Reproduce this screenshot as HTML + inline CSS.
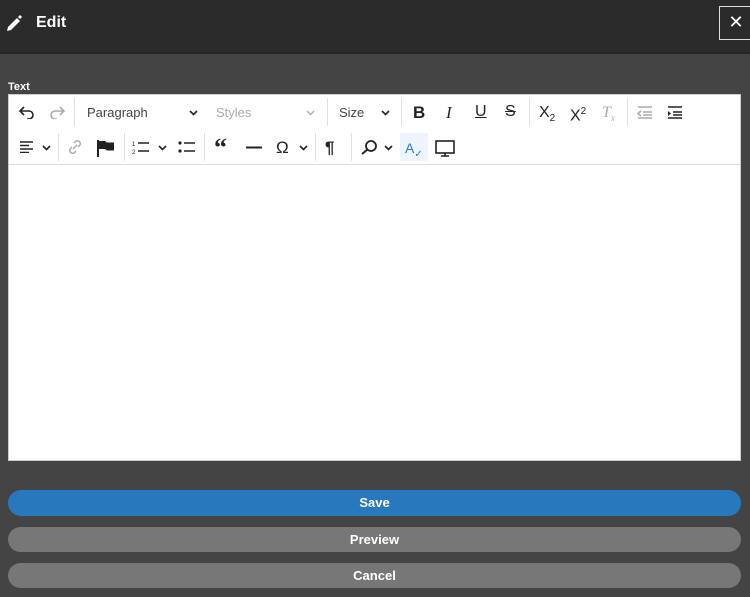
<!DOCTYPE html>
<html><head><style>
*{box-sizing:border-box;margin:0;padding:0}
body{width:750px;height:597px;background:#444;font-family:"Liberation Sans",sans-serif;position:relative;overflow:hidden}
.hdr{position:absolute;left:0;top:0;width:750px;height:54px;background:#2b2b2b;border-bottom:2px solid #262626}
.hdr .t{position:absolute;left:36px;top:14px;color:#fff;font-weight:bold;font-size:16px}
.close{position:absolute;left:719px;top:6px;width:34px;height:34px;border:1.5px solid #ddd;color:#fff;font-size:18px;text-align:center;line-height:30px}
.lbl{position:absolute;left:8px;top:81px;color:#fff;font-size:11px;font-weight:bold}
.ed{position:absolute;left:8px;top:94px;width:733px;height:367px;background:#fff;border:1px solid #ccc}
.tb{position:absolute;left:0;top:0;width:100%;height:70px;border-bottom:1px solid #ddd}
.i{position:absolute;font-size:14px;color:#222;line-height:18px}
.g{color:#aaa}
.sep{position:absolute;width:1px;height:28px;background:#e0e0e0}
.btn{position:absolute;left:8px;width:733px;border-radius:13px;color:#fff;font-weight:bold;font-size:13px;text-align:center}
svg{position:absolute}
</style></head><body>
<div class="hdr">
<svg style="left:6px;top:14px" width="16" height="18" viewBox="0 0 16 18"><path d="M1 17l1-4L11 4l3 3-9 9z M12 3l2-2 2 2-2 2z" fill="#fff"/></svg>
<div class="t">Edit</div>
</div>
<div class="close">✕</div>
<div class="lbl">Text</div>
<div class="ed">
<div class="tb">
<svg style="left:10px;top:10px" width="16" height="14"><path d="M5 2L1 6l4 4M1 6h9a4 4 0 010 8H8" fill="none" stroke="#222" stroke-width="1.6"/></svg>
<svg style="left:40px;top:10px" width="16" height="14"><path d="M11 2l4 4-4 4M15 6H6a4 4 0 000 8h2" fill="none" stroke="#aaa" stroke-width="1.6"/></svg>
<div class="sep" style="left:65px;top:3px"></div>
<span class="i" style="left:78px;top:9px;font-size:13px;color:#444">Paragraph</span>
<svg style="left:180px;top:15px" width="9" height="6"><path d="M1 1l3.5 3.5L8 1" fill="none" stroke="#222" stroke-width="1.6"/></svg>
<span class="i g" style="left:207px;top:9px;font-size:13px">Styles</span>
<svg style="left:297px;top:15px" width="9" height="6"><path d="M1 1l3.5 3.5L8 1" fill="none" stroke="#aaa" stroke-width="1.4"/></svg>
<div class="sep" style="left:318px;top:3px"></div>
<span class="i" style="left:330px;top:9px;font-size:13px;color:#444">Size</span>
<svg style="left:372px;top:15px" width="9" height="6"><path d="M1 1l3.5 3.5L8 1" fill="none" stroke="#222" stroke-width="1.6"/></svg>
<div class="sep" style="left:392px;top:3px"></div>
<span class="i" style="left:404px;top:9px;font-size:17px;font-weight:bold">B</span>
<span class="i" style="left:437px;top:9px;font-size:17px;font-style:italic;font-family:'Liberation Serif'">I</span>
<span class="i" style="left:466px;top:8px;font-size:16px;text-decoration:underline">U</span>
<span class="i" style="left:496px;top:8px;font-size:16px;text-decoration:line-through">S</span>
<div class="sep" style="left:520px;top:3px"></div>
<span class="i" style="left:530px;top:9px;font-size:16px">X<sub style="font-size:10px">2</sub></span>
<span class="i" style="left:561px;top:8px;font-size:16px">X<sup style="font-size:10px">2</sup></span>
<span class="i g" style="left:593px;top:9px;font-size:16px;font-style:italic;font-family:'Liberation Serif'">T<sub style="font-size:9px">x</sub></span>
<div class="sep" style="left:618px;top:3px"></div>
<svg style="left:628px;top:11px" width="16" height="13"><path d="M1 1h14M6 6h9M6 9h9M1 12h14M4 5L1 7.5 4 10" fill="none" stroke="#aaa" stroke-width="1.6"/></svg>
<svg style="left:658px;top:11px" width="16" height="13"><path d="M1 1h14M6 6h9M6 9h9M1 12h14" fill="none" stroke="#222" stroke-width="1.6"/><path d="M1 5l3 2.5L1 10z" fill="#222"/></svg>
<svg style="left:10px;top:46px" width="15" height="12"><path d="M1 1h13M1 4.5h9M1 8h13M1 11.5h9" stroke="#222" stroke-width="1.5"/></svg>
<svg style="left:33px;top:50px" width="9" height="6"><path d="M1 1l3.5 3.5L8 1" fill="none" stroke="#222" stroke-width="1.6"/></svg>
<div class="sep" style="left:49px;top:38px"></div>
<svg style="left:58px;top:44px" width="16" height="16"><path d="M6 10l4-4M7 4l2-2a3 3 0 014 4l-2 2M9 12l-2 2a3 3 0 01-4-4l2-2" fill="none" stroke="#aaa" stroke-width="1.4"/></svg>
<svg style="left:87px;top:44px" width="20" height="18"><path d="M2 1v17" stroke="#222" stroke-width="2"/><path d="M3 2h6l2 1.5h7v8h-7l-2-1.5H3z" fill="#222"/></svg>
<div class="sep" style="left:115px;top:38px"></div>
<svg style="left:123px;top:45px" width="18" height="14"><text x="0" y="6" font-size="6" fill="#222" font-family="Liberation Sans">1</text><text x="0" y="14" font-size="6" fill="#222" font-family="Liberation Sans">2</text><path d="M6 3h11M6 11h11" stroke="#222" stroke-width="1.6"/></svg>
<svg style="left:149px;top:50px" width="9" height="6"><path d="M1 1l3.5 3.5L8 1" fill="none" stroke="#222" stroke-width="1.6"/></svg>
<svg style="left:169px;top:45px" width="18" height="14"><circle cx="2" cy="3" r="1.6" fill="#222"/><circle cx="2" cy="11" r="1.6" fill="#222"/><path d="M6 3h11M6 11h11" stroke="#222" stroke-width="1.6"/></svg>
<div class="sep" style="left:195px;top:38px"></div>
<span class="i" style="left:205px;top:44px;font-size:26px;font-weight:bold;font-family:'Liberation Serif'">“</span>
<svg style="left:237px;top:51px" width="16" height="3"><path d="M0 1.5h16" stroke="#222" stroke-width="2"/></svg>
<span class="i" style="left:267px;top:44px;font-size:17px">Ω</span>
<svg style="left:290px;top:50px" width="9" height="6"><path d="M1 1l3.5 3.5L8 1" fill="none" stroke="#222" stroke-width="1.6"/></svg>
<div class="sep" style="left:306px;top:38px"></div>
<span class="i" style="left:316px;top:44px;font-size:17px;font-weight:bold">¶</span>
<div class="sep" style="left:342px;top:38px"></div>
<svg style="left:352px;top:44px" width="18" height="16"><circle cx="10" cy="7" r="5" fill="none" stroke="#222" stroke-width="1.8"/><path d="M6.5 10.5L1 15" stroke="#222" stroke-width="2"/></svg>
<svg style="left:375px;top:50px" width="9" height="6"><path d="M1 1l3.5 3.5L8 1" fill="none" stroke="#222" stroke-width="1.6"/></svg>
<div style="position:absolute;left:391px;top:38px;width:28px;height:28px;background:#eef4fb"></div>
<span class="i" style="left:396px;top:44px;font-size:14px;color:#2a7ad0">A<sub style="font-size:10px">✓</sub></span>
<svg style="left:426px;top:45px" width="20" height="18"><rect x="1" y="1" width="18" height="12" fill="none" stroke="#222" stroke-width="1.6"/><path d="M6 16h8M10 13v3" stroke="#222" stroke-width="1.6"/></svg>
</div>
</div>
<div class="btn" style="top:490px;height:26px;line-height:26px;background:#2878be">Save</div>
<div class="btn" style="top:527px;height:25px;line-height:25px;background:#777">Preview</div>
<div class="btn" style="top:563px;height:25px;line-height:25px;background:#777">Cancel</div>
</body></html>
